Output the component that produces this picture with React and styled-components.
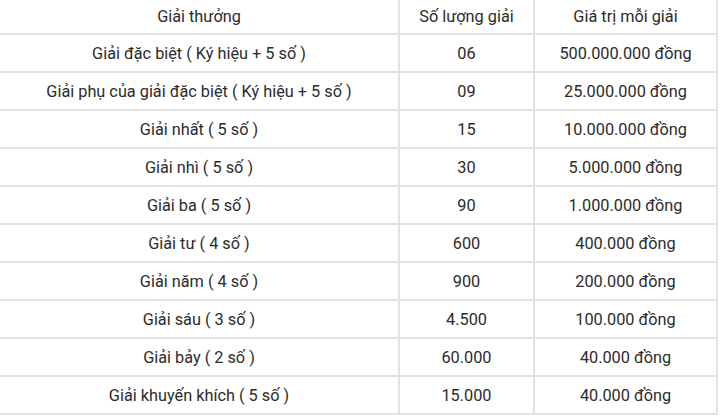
import React from 'react';
import styled, { createGlobalStyle } from 'styled-components';

const GlobalStyle = createGlobalStyle`
  html, body { margin: 0; padding: 0; background: #fff; }
  body { font-family: Roboto, "Noto Sans", "Liberation Sans", sans-serif; }
`;

const Table = styled.div`
  width: 718px;
  color: #2b2b2b;
  font-size: 16.3px;
`;

const Row = styled.div`
  display: grid;
  grid-template-columns: 400px 135px 183px;
  height: ${({ header }) => (header ? '35px' : '38px')};
  box-sizing: border-box;
  border-bottom: 2px solid #e2e2e2;
`;

const Cell = styled.div`
  display: flex;
  align-items: center;
  justify-content: center;
  box-sizing: border-box;
  border-right: 2px solid #e2e2e2;
  white-space: nowrap;
`;

const prizes = [
  ['Giải đặc biệt ( Ký hiệu + 5 số )', '06', '500.000.000 đồng'],
  ['Giải phụ của giải đặc biệt ( Ký hiệu + 5 số )', '09', '25.000.000 đồng'],
  ['Giải nhất ( 5 số )', '15', '10.000.000 đồng'],
  ['Giải nhì ( 5 số )', '30', '5.000.000 đồng'],
  ['Giải ba ( 5 số )', '90', '1.000.000 đồng'],
  ['Giải tư ( 4 số )', '600', '400.000 đồng'],
  ['Giải năm ( 4 số )', '900', '200.000 đồng'],
  ['Giải sáu ( 3 số )', '4.500', '100.000 đồng'],
  ['Giải bảy ( 2 số )', '60.000', '40.000 đồng'],
  ['Giải khuyến khích ( 5 số )', '15.000', '40.000 đồng'],
];

export default function App() {
  return (
    <>
      <GlobalStyle />
      <Table>
        <Row header>
          <Cell>Giải thưởng</Cell>
          <Cell>Số lượng giải</Cell>
          <Cell>Giá trị mỗi giải</Cell>
        </Row>
        {prizes.map(p => (
          <Row key={p[0]}>
            <Cell>{p[0]}</Cell>
            <Cell>{p[1]}</Cell>
            <Cell>{p[2]}</Cell>
          </Row>
        ))}
      </Table>
    </>
  );
}
